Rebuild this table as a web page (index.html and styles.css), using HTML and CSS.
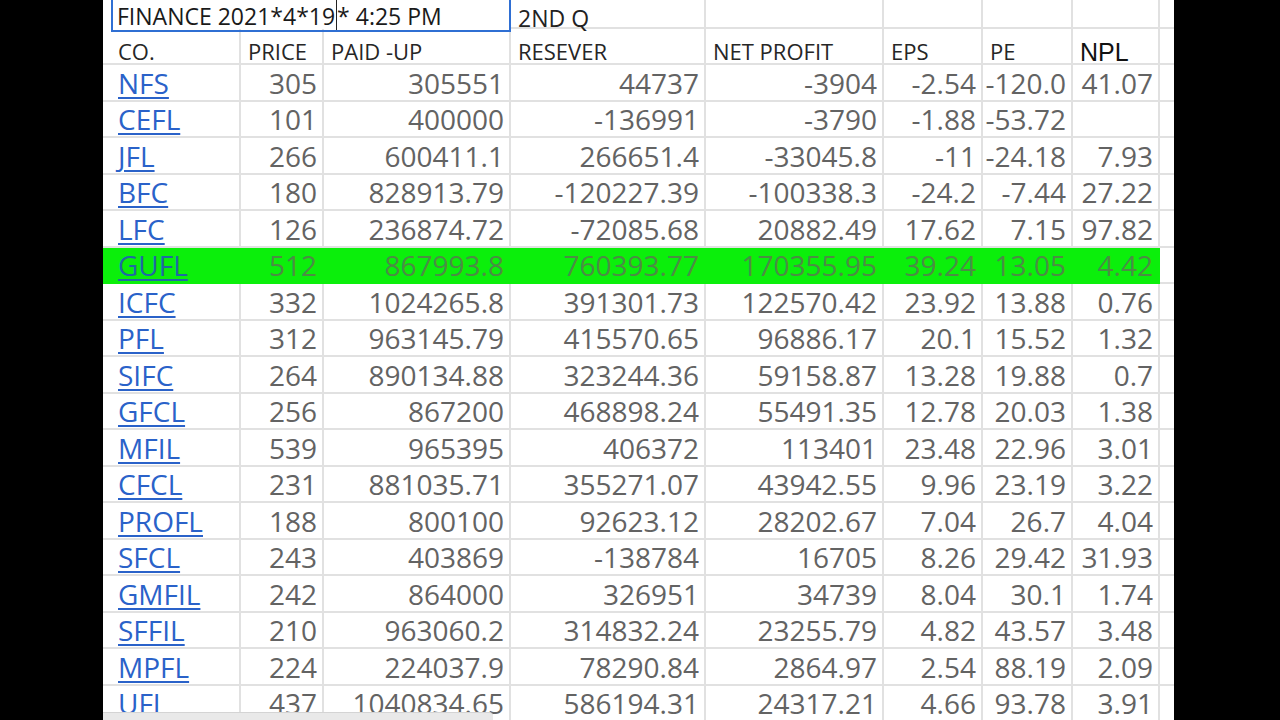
FILE: index.html
```html
<!DOCTYPE html>
<html>
<head>
<meta charset="utf-8">
<link rel="stylesheet" href="styles.css">
</head>
<body>
<div class="screen">
  <div class="sheet">
    <div class="row title">
      <div class="c ttl">FINANCE 2021*4*19<span class="caret"></span>* 4:25 PM</div>
      <div class="c">2ND Q</div>
      <div class="c"></div>
      <div class="c"></div>
      <div class="c"></div>
      <div class="c"></div>
      <div class="c"></div>
    </div>
    <div class="row head">
      <div class="c">CO.</div>
      <div class="c">PRICE</div>
      <div class="c">PAID -UP</div>
      <div class="c">RESEVER</div>
      <div class="c">NET PROFIT</div>
      <div class="c">EPS</div>
      <div class="c">PE</div>
      <div class="c npl">NPL</div>
      <div class="c"></div>
    </div>
    <div class="row data"><div class="c"><a href="#">NFS</a></div><div class="c n">305</div><div class="c n">305551</div><div class="c n">44737</div><div class="c n">-3904</div><div class="c n">-2.54</div><div class="c n">-120.0</div><div class="c n">41.07</div><div class="c"></div></div>
    <div class="row data"><div class="c"><a href="#">CEFL</a></div><div class="c n">101</div><div class="c n">400000</div><div class="c n">-136991</div><div class="c n">-3790</div><div class="c n">-1.88</div><div class="c n">-53.72</div><div class="c n"></div><div class="c"></div></div>
    <div class="row data"><div class="c"><a href="#">JFL</a></div><div class="c n">266</div><div class="c n">600411.1</div><div class="c n">266651.4</div><div class="c n">-33045.8</div><div class="c n">-11</div><div class="c n">-24.18</div><div class="c n">7.93</div><div class="c"></div></div>
    <div class="row data"><div class="c"><a href="#">BFC</a></div><div class="c n">180</div><div class="c n">828913.79</div><div class="c n">-120227.39</div><div class="c n">-100338.3</div><div class="c n">-24.2</div><div class="c n">-7.44</div><div class="c n">27.22</div><div class="c"></div></div>
    <div class="row data"><div class="c"><a href="#">LFC</a></div><div class="c n">126</div><div class="c n">236874.72</div><div class="c n">-72085.68</div><div class="c n">20882.49</div><div class="c n">17.62</div><div class="c n">7.15</div><div class="c n">97.82</div><div class="c"></div></div>
    <div class="row data hl"><div class="c"><a href="#">GUFL</a></div><div class="c n">512</div><div class="c n">867993.8</div><div class="c n">760393.77</div><div class="c n">170355.95</div><div class="c n">39.24</div><div class="c n">13.05</div><div class="c n">4.42</div><div class="c"></div></div>
    <div class="row data"><div class="c"><a href="#">ICFC</a></div><div class="c n">332</div><div class="c n">1024265.8</div><div class="c n">391301.73</div><div class="c n">122570.42</div><div class="c n">23.92</div><div class="c n">13.88</div><div class="c n">0.76</div><div class="c"></div></div>
    <div class="row data"><div class="c"><a href="#">PFL</a></div><div class="c n">312</div><div class="c n">963145.79</div><div class="c n">415570.65</div><div class="c n">96886.17</div><div class="c n">20.1</div><div class="c n">15.52</div><div class="c n">1.32</div><div class="c"></div></div>
    <div class="row data"><div class="c"><a href="#">SIFC</a></div><div class="c n">264</div><div class="c n">890134.88</div><div class="c n">323244.36</div><div class="c n">59158.87</div><div class="c n">13.28</div><div class="c n">19.88</div><div class="c n">0.7</div><div class="c"></div></div>
    <div class="row data"><div class="c"><a href="#">GFCL</a></div><div class="c n">256</div><div class="c n">867200</div><div class="c n">468898.24</div><div class="c n">55491.35</div><div class="c n">12.78</div><div class="c n">20.03</div><div class="c n">1.38</div><div class="c"></div></div>
    <div class="row data"><div class="c"><a href="#">MFIL</a></div><div class="c n">539</div><div class="c n">965395</div><div class="c n">406372</div><div class="c n">113401</div><div class="c n">23.48</div><div class="c n">22.96</div><div class="c n">3.01</div><div class="c"></div></div>
    <div class="row data"><div class="c"><a href="#">CFCL</a></div><div class="c n">231</div><div class="c n">881035.71</div><div class="c n">355271.07</div><div class="c n">43942.55</div><div class="c n">9.96</div><div class="c n">23.19</div><div class="c n">3.22</div><div class="c"></div></div>
    <div class="row data"><div class="c"><a href="#">PROFL</a></div><div class="c n">188</div><div class="c n">800100</div><div class="c n">92623.12</div><div class="c n">28202.67</div><div class="c n">7.04</div><div class="c n">26.7</div><div class="c n">4.04</div><div class="c"></div></div>
    <div class="row data"><div class="c"><a href="#">SFCL</a></div><div class="c n">243</div><div class="c n">403869</div><div class="c n">-138784</div><div class="c n">16705</div><div class="c n">8.26</div><div class="c n">29.42</div><div class="c n">31.93</div><div class="c"></div></div>
    <div class="row data"><div class="c"><a href="#">GMFIL</a></div><div class="c n">242</div><div class="c n">864000</div><div class="c n">326951</div><div class="c n">34739</div><div class="c n">8.04</div><div class="c n">30.1</div><div class="c n">1.74</div><div class="c"></div></div>
    <div class="row data"><div class="c"><a href="#">SFFIL</a></div><div class="c n">210</div><div class="c n">963060.2</div><div class="c n">314832.24</div><div class="c n">23255.79</div><div class="c n">4.82</div><div class="c n">43.57</div><div class="c n">3.48</div><div class="c"></div></div>
    <div class="row data"><div class="c"><a href="#">MPFL</a></div><div class="c n">224</div><div class="c n">224037.9</div><div class="c n">78290.84</div><div class="c n">2864.97</div><div class="c n">2.54</div><div class="c n">88.19</div><div class="c n">2.09</div><div class="c"></div></div>
    <div class="row data"><div class="c"><a href="#">UFL</a></div><div class="c n">437</div><div class="c n">1040834.65</div><div class="c n">586194.31</div><div class="c n">24317.21</div><div class="c n">4.66</div><div class="c n">93.78</div><div class="c n">3.91</div><div class="c"></div></div>
    <div class="sel"></div>
    <div class="hscroll"></div>
  </div>
</div>
</body>
</html>
```
FILE: styles.css
```css
html, body {
  margin: 0;
  background: #000;
  overflow: hidden;
}
.screen {
  width: 1280px;
  height: 720px;
  display: flex;
}
.sheet {
  margin-left: 103px;
  width: 1071px;
  height: 720px;
  background: #fff;
  position: relative;
  overflow: hidden;
  font-family: "Open Sans", "Noto Sans", sans-serif;
}
.row {
  display: grid;
  grid-template-columns: 138px 83px 187px 195px 178px 99px 90px 87px 14px;
}
.c {
  box-sizing: border-box;
  border-right: 2px solid #e1e1e1;
  border-bottom: 2px solid #e1e1e1;
  display: flex;
  align-items: flex-end;
  white-space: nowrap;
  line-height: 1;
  padding: 0 5px 3px 7px;
  min-width: 0;
}
.c:first-child {
  padding-left: 15px;
}
.c:last-child {
  border-right: none;
}
.n {
  justify-content: flex-end;
}
.title {
  height: 29px;
  grid-template-columns: 408px 195px 178px 99px 90px 87px 14px;
}
.title .c {
  font-size: 23px;
  color: #222;
  line-height: 0.8;
  padding-bottom: 0;
}
.title .ttl {
  border: none;
  font-size: 23px;
  color: #1a1a1a;
  padding-left: 14px;
  padding-bottom: 4px;
}
.caret {
  display: inline-block;
  width: 1px;
  height: 30px;
  background: #222;
  margin-bottom: -5px;
  margin-left: 1px;
}
.head {
  height: 36px;
}
.head .c {
  font-size: 22px;
  color: #262626;
  padding-bottom: 1px;
}
.head .npl {
  font-family: "Liberation Sans", Arial, sans-serif;
  font-size: 25px;
  line-height: 0.8;
  color: #111;
  padding-bottom: 1px;
}
.data {
  height: 36.5px;
}
.data .c {
  font-size: 28px;
  color: #636363;
}
.data a {
  color: #2a62c9;
  text-decoration: underline;
  text-decoration-thickness: 2px;
  text-underline-offset: 3px;
}
.hl .c {
  background: #0bef0b;
  border-color: #0bef0b;
  color: #4c8c45;
}
.hl .c:last-child {
  background: #fff;
  border-color: #e1e1e1;
}
.hl a {
  color: #1f6aa3;
}
.sel {
  position: absolute;
  left: 8px;
  top: -3px;
  width: 400px;
  height: 35px;
  box-sizing: border-box;
  border: 2px solid #2f6fd3;
}
.hscroll {
  position: absolute;
  left: 0;
  bottom: 0;
  width: 390px;
  height: 7px;
  background: #e9e9e9;
  border-top: 1px solid #d4d4d4;
  border-radius: 0 4px 0 0;
}
```
